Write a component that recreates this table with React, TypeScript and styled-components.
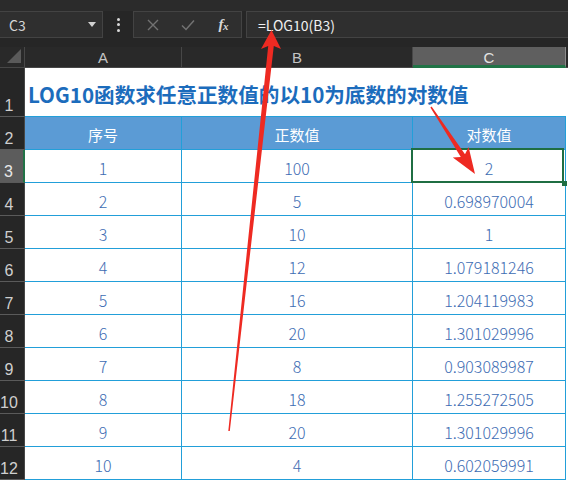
import React from "react";
import styled, { createGlobalStyle } from "styled-components";

const GlobalStyle = createGlobalStyle`
  html, body { margin: 0; padding: 0; background: #ffffff; }
  body { overflow: hidden; }
`;

const FONT = `"Noto Sans CJK SC", "Noto Sans", sans-serif`;
const GRID = "#229fd9";
const GREEN = "#1f6e43";

const Page = styled.div`
  position: relative;
  width: 568px;
  height: 480px;
  overflow: hidden;
  background: #ffffff;
  font-family: ${FONT};
`;

const FormulaBar = styled.div`
  height: 47px;
  box-sizing: border-box;
  padding-top: 11px;
  background: linear-gradient(#2b2b2b 0 11px, #262626 11px);
  display: flex;
  align-items: flex-start;
`;

const NameBox = styled.div`
  width: 103px;
  height: 27px;
  box-sizing: border-box;
  border: 1px solid #434343;
  border-left: none;
  background: #2f2f2f;
  display: flex;
  align-items: center;
  justify-content: space-between;
  padding: 0 6px 0 9px;
  color: #d6d6d6;
  font-size: 14px;
`;

const Caret = styled.span`
  width: 0;
  height: 0;
  border-left: 4px solid transparent;
  border-right: 4px solid transparent;
  border-top: 5px solid #d0d0d0;
`;

const Dots = styled.div`
  width: 30px;
  height: 27px;
  display: flex;
  flex-direction: column;
  align-items: center;
  justify-content: center;
  gap: 2.5px;
  & > span {
    width: 3px;
    height: 3px;
    border-radius: 50%;
    background: #d8d8d8;
  }
`;

const ActionBox = styled.div`
  width: 109px;
  height: 27px;
  box-sizing: border-box;
  border: 1px solid #434343;
  background: #2f2f2f;
  display: flex;
  align-items: center;
  padding-left: 1px;
`;

const IconSlot = styled.div`
  width: 36px;
  height: 25px;
  display: flex;
  align-items: center;
  justify-content: center;
`;

const Fx = styled.span`
  font-family: "Liberation Serif", serif;
  font-style: italic;
  font-weight: bold;
  font-size: 15px;
  color: #d8d8d8;
  letter-spacing: -0.5px;
  & > sub {
    font-size: 11px;
    vertical-align: -1px;
  }
`;

const FormulaBox = styled.div`
  flex: 1;
  margin-left: 4px;
  height: 27px;
  box-sizing: border-box;
  border: 1px solid #434343;
  border-right: none;
  background: #2f2f2f;
  display: flex;
  align-items: center;
  padding-left: 11px;
  color: #f0f0f0;
  font-size: 14px;
`;

const Sheet = styled.div`
  display: grid;
  grid-template-columns: 25px 157px 231px 153px 2px;
  grid-template-rows: 21px 49px 33px repeat(10, 33px);
`;

const Corner = styled.div`
  position: relative;
  background: #292929;
  border-right: 1px solid #474747;
  border-bottom: 1px solid #474747;
  &::after {
    content: "";
    position: absolute;
    right: 3px;
    bottom: 4px;
    width: 0;
    height: 0;
    border-left: 14px solid transparent;
    border-bottom: 14px solid #5a5a5a;
  }
`;

const ColHead = styled.div<{ $active?: boolean }>`
  box-sizing: border-box;
  background: ${(p) => (p.$active ? "#5f5f5f" : "#292929")};
  border-right: 1px solid ${(p) => (p.$active ? "#8a8a8a" : "#474747")};
  border-bottom: ${(p) => (p.$active ? `3px solid #217346` : "1px solid #474747")};
  color: ${(p) => (p.$active ? "#e4e4e4" : "#c4c4c4")};
  font-family: "Liberation Sans", sans-serif;
  font-size: 15px;
  display: flex;
  align-items: flex-end;
  justify-content: center;
  padding-bottom: ${(p) => (p.$active ? "0" : "2px")};
  line-height: 1;
`;

const HeadFiller = styled.div`
  background: #292929;
  border-bottom: 1px solid #474747;
`;

const RowHead = styled.div<{ $active?: boolean }>`
  box-sizing: border-box;
  background: ${(p) => (p.$active ? "#5c5c5c" : "#262626")};
  border-bottom: 1px solid #5a5a5a;
  border-right: ${(p) => (p.$active ? `2px solid #217346` : "1px solid #474747")};
  color: ${(p) => (p.$active ? "#e8e8e8" : "#cfcfcf")};
  font-family: "Liberation Sans", sans-serif;
  font-size: 16px;
  display: flex;
  align-items: flex-end;
  justify-content: center;
  padding: 0 6px 2px 0;
  line-height: 1;
`;

const TitleCell = styled.div`
  grid-column: span 3;
  box-sizing: border-box;
  border-bottom: 1px solid ${GRID};
  display: flex;
  align-items: center;
  padding: 4px 0 0 3px;
  color: #1c6cbc;
  font-weight: bold;
  font-size: 20.6px;
  white-space: nowrap;
`;

const Filler = styled.div`
  background: #ffffff;
`;

const HeadCell = styled.div`
  box-sizing: border-box;
  background: #5b9bd5;
  border-right: 1px solid ${GRID};
  border-bottom: 1px solid ${GRID};
  color: #ffffff;
  font-size: 15px;
  display: flex;
  align-items: center;
  justify-content: center;
  padding-top: 3px;
`;

const DataCell = styled.div<{ $selected?: boolean }>`
  position: relative;
  box-sizing: border-box;
  background: #ffffff;
  border-right: 1px solid ${GRID};
  border-bottom: 1px solid ${GRID};
  color: #3d6cb3;
  font-size: 16px;
  font-weight: 300;
  display: flex;
  align-items: center;
  justify-content: center;
  padding-top: 3px;
  &::after {
    content: "";
    display: ${(p) => (p.$selected ? "block" : "none")};
    position: absolute;
    top: -2px;
    left: -2px;
    right: 1px;
    bottom: -1px;
    border: 2px solid ${GREEN};
  }
  &::before {
    content: "";
    display: ${(p) => (p.$selected ? "block" : "none")};
    position: absolute;
    right: -2px;
    bottom: -4px;
    width: 5px;
    height: 5px;
    background: ${GREEN};
    z-index: 1;
  }
`;

const Annotations = styled.svg`
  position: absolute;
  left: 0;
  top: 0;
  pointer-events: none;
`;

const rows: [number, number, string][] = [
  [1, 100, "2"],
  [2, 5, "0.698970004"],
  [3, 10, "1"],
  [4, 12, "1.079181246"],
  [5, 16, "1.204119983"],
  [6, 20, "1.301029996"],
  [7, 8, "0.903089987"],
  [8, 18, "1.255272505"],
  [9, 20, "1.301029996"],
  [10, 4, "0.602059991"],
];

export default function App() {
  return (
    <Page>
      <GlobalStyle />
      <FormulaBar>
        <NameBox>
          <span>C3</span>
          <Caret />
        </NameBox>
        <Dots>
          <span />
          <span />
          <span />
        </Dots>
        <ActionBox>
          <IconSlot>
            <svg width="12" height="12" viewBox="0 0 12 12">
              <path d="M1 1 L11 11 M11 1 L1 11" stroke="#727272" strokeWidth="1.4" fill="none" />
            </svg>
          </IconSlot>
          <IconSlot>
            <svg width="14" height="12" viewBox="0 0 14 12">
              <path d="M1 6.5 L5 10.5 L13 1.5" stroke="#727272" strokeWidth="1.5" fill="none" />
            </svg>
          </IconSlot>
          <IconSlot>
            <Fx>
              f<sub>x</sub>
            </Fx>
          </IconSlot>
        </ActionBox>
        <FormulaBox>=LOG10(B3)</FormulaBox>
      </FormulaBar>
      <Sheet>
        <Corner />
        <ColHead>A</ColHead>
        <ColHead>B</ColHead>
        <ColHead $active>C</ColHead>
        <HeadFiller />

        <RowHead>1</RowHead>
        <TitleCell>LOG10函数求任意正数值的以10为底数的对数值</TitleCell>
        <Filler />

        <RowHead>2</RowHead>
        <HeadCell>序号</HeadCell>
        <HeadCell>正数值</HeadCell>
        <HeadCell>对数值</HeadCell>
        <Filler />

        {rows.map(([n, v, l], i) => (
          <React.Fragment key={n}>
            <RowHead $active={i === 0}>{i + 3}</RowHead>
            <DataCell>{n}</DataCell>
            <DataCell>{v}</DataCell>
            <DataCell $selected={i === 0}>{l}</DataCell>
            <Filler />
          </React.Fragment>
        ))}
      </Sheet>
      <Annotations width="568" height="480" viewBox="0 0 568 480">
        <polygon
          points="271.5,30 281,49 273.8,46 229.8,431 228.3,431 268.2,46 261,49"
          fill="#ee2a22"
        />
        <polygon
          points="475,174 468.6,147.1 465,154.2 431.6,106.6 430.4,107.4 460.8,157 452.8,157.5"
          fill="#ee2a22"
        />
      </Annotations>
    </Page>
  );
}
